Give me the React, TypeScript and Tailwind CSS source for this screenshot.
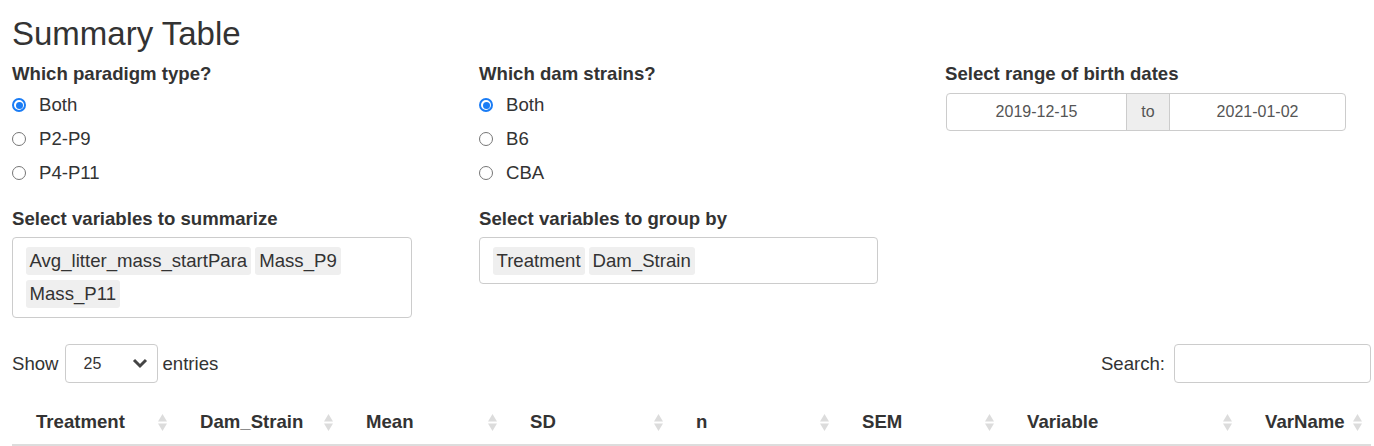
const font = { fontFamily: '"Liberation Sans", Arial, sans-serif' };

function Radio({ label, checked }: { label: string; checked?: boolean }) {
  return (
    <div className="flex h-[34px] items-center">
      {checked ? (
        <span className="flex h-[14px] w-[14px] items-center justify-center rounded-full border-[2px] border-[#1a7cf5] bg-white">
          <span className="h-[7px] w-[7px] rounded-full bg-[#1a7cf5]" />
        </span>
      ) : (
        <span className="h-[14px] w-[14px] rounded-full border-[1.5px] border-[#767676] bg-white" />
      )}
      <span className="ml-[13px] text-[18.6px] text-[#333]">{label}</span>
    </div>
  );
}

function Label({ children }: { children: React.ReactNode }) {
  return <div className="text-[18.6px] font-bold leading-[26px] text-[#333]">{children}</div>;
}

function Tag({ children }: { children: React.ReactNode }) {
  return (
    <span className="flex h-[28px] items-center rounded-[3px] bg-[#efefef] px-[4px] text-[18.6px] text-[#333]">
      {children}
    </span>
  );
}

function SortIcon() {
  return (
    <svg width="9" height="17" viewBox="0 0 9 17" className="shrink-0">
      <path d="M4.5 0 L9 7.5 L0 7.5 Z" fill="#dcdcdc" />
      <path d="M0 9.5 L9 9.5 L4.5 17 Z" fill="#dcdcdc" />
    </svg>
  );
}

const columns: [string, string][] = [
  ["Treatment", "w-[164px]"],
  ["Dam_Strain", "w-[166px]"],
  ["Mean", "w-[164px]"],
  ["SD", "w-[166px]"],
  ["n", "w-[166px]"],
  ["SEM", "w-[165px]"],
  ["Variable", "w-[238px]"],
  ["VarName", "flex-1"],
];

export default function App() {
  return (
    <div className="min-h-[446px] bg-white pl-[12px] pr-[3px] text-[#333]" style={font}>
      <h2 className="pt-[16px] text-[33px] leading-[36px] font-normal text-[#333]">Summary Table</h2>

      <div className="mt-[9px] grid grid-cols-[467px_466px_1fr]">
        <div>
          <Label>Which paradigm type?</Label>
          <div className="mt-[1px]">
            <Radio label="Both" checked />
            <Radio label="P2-P9" />
            <Radio label="P4-P11" />
          </div>
        </div>
        <div>
          <Label>Which dam strains?</Label>
          <div className="mt-[1px]">
            <Radio label="Both" checked />
            <Radio label="B6" />
            <Radio label="CBA" />
          </div>
        </div>
        <div>
          <Label>Select range of birth dates</Label>
          <div className="ml-[1px] mt-[6px] flex h-[38px] w-[400px] overflow-hidden rounded-[4px] border border-[#ccc] text-[16px] text-[#555]">
            <div className="flex w-[179px] items-center justify-center">2019-12-15</div>
            <div className="flex w-[44px] items-center justify-center border-x border-[#ccc] bg-[#eee]">to</div>
            <div className="flex flex-1 items-center justify-center">2021-01-02</div>
          </div>
        </div>
      </div>

      <div className="mt-[16px] grid grid-cols-[467px_466px_1fr]">
        <div>
          <Label>Select variables to summarize</Label>
          <div className="mt-[5px] flex w-[400px] flex-wrap gap-x-[4px] gap-y-[5px] rounded-[4px] border-[1.5px] border-[#ccc] px-[12.5px] py-[9px]">
            <Tag>Avg_litter_mass_startPara</Tag>
            <Tag>Mass_P9</Tag>
            <Tag>Mass_P11</Tag>
          </div>
        </div>
        <div>
          <Label>Select variables to group by</Label>
          <div className="mt-[5px] flex w-[399px] flex-wrap gap-x-[4px] gap-y-[5px] rounded-[4px] border-[1.5px] border-[#ccc] px-[12.5px] py-[8.5px]">
            <Tag>Treatment</Tag>
            <Tag>Dam_Strain</Tag>
          </div>
        </div>
        <div />
      </div>

      <div className="mt-[26px] flex items-center justify-between text-[18.6px] text-[#333]">
        <div className="flex items-center">
          <span>Show</span>
          <div className="ml-[6px] mr-[5px] flex h-[39px] w-[93px] items-center justify-between rounded-[4px] border border-[#ccc] pl-[18px] pr-[9px]">
            <span className="text-[16px]">25</span>
            <svg width="16" height="11" viewBox="0 0 16 11">
              <path d="M2 2 L8 8 L14 2" fill="none" stroke="#444" strokeWidth="3" />
            </svg>
          </div>
          <span>entries</span>
        </div>
        <div className="flex items-center">
          <span>Search:</span>
          <div className="ml-[9px] h-[39px] w-[197px] rounded-[4px] border border-[#ccc]" />
        </div>
      </div>

      <div className="mt-[17px] flex h-[46px] border-b-2 border-[#ddd]">
        {columns.map(([name, w]) => (
          <div key={name} className={`${w} flex items-center justify-between pl-[24px] pr-[9px]`}>
            <span className="text-[18.6px] font-bold text-[#333]">{name}</span>
            <SortIcon />
          </div>
        ))}
      </div>
    </div>
  );
}
